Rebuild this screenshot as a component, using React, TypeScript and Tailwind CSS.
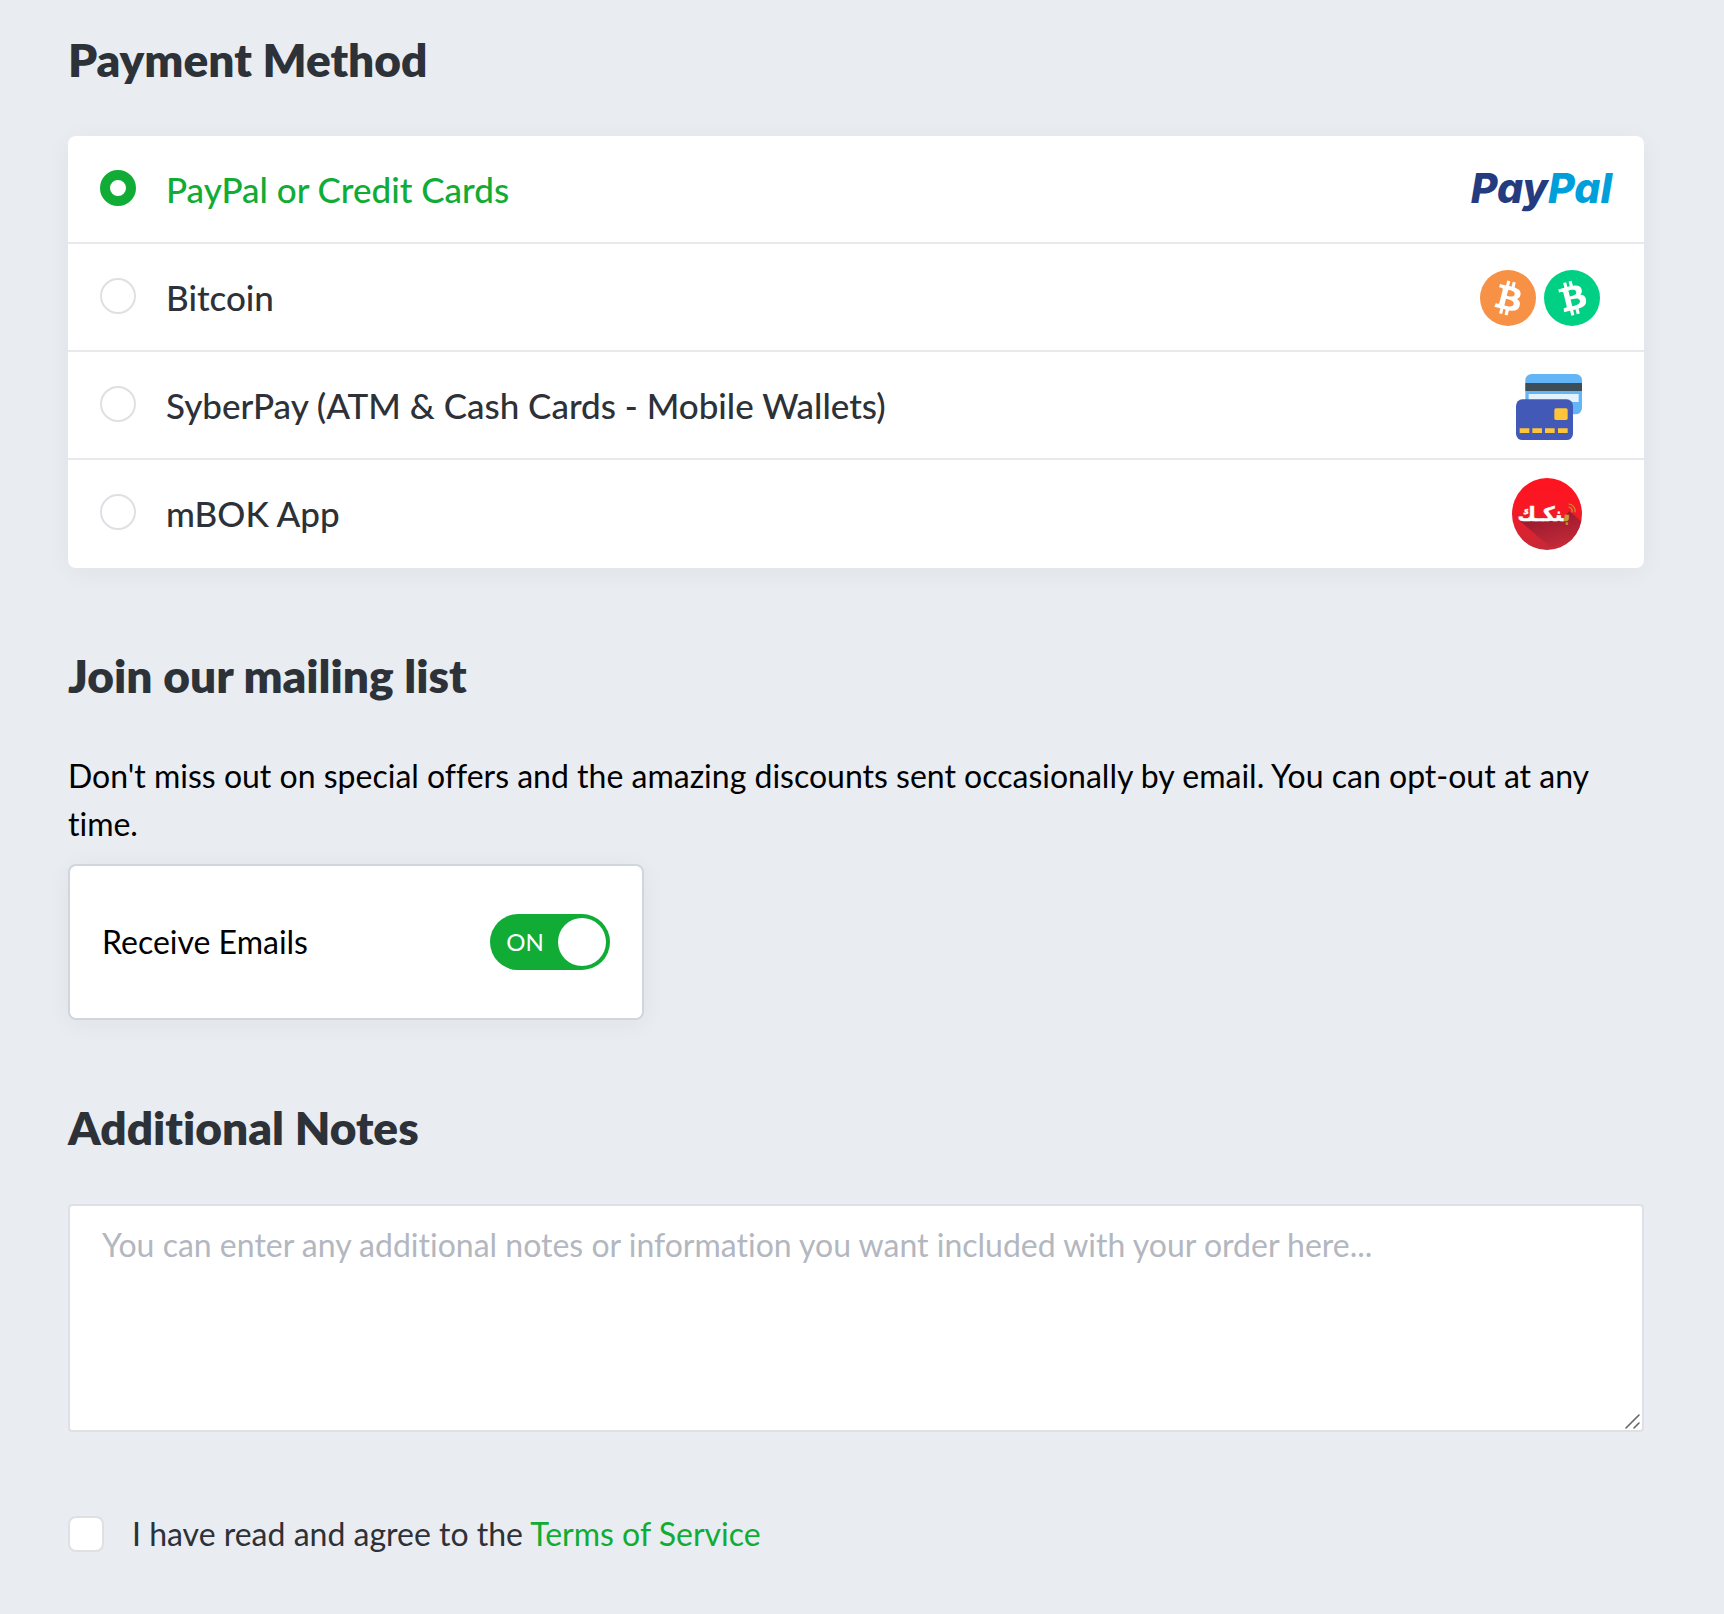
import { useState, type ReactNode } from "react";

const BTC =
  "M23.189 14.02c.314-2.096-1.283-3.223-3.465-3.975l.708-2.84-1.728-.43-.69 2.765c-.454-.114-.92-.22-1.385-.326l.695-2.783L15.596 6l-.708 2.839c-.376-.086-.746-.17-1.104-.26l.002-.009-2.384-.595-.46 1.846s1.283.294 1.256.312c.7.175.826.638.805 1.006l-.806 3.235c.048.012.11.03.18.057l-.183-.045-1.13 4.532c-.086.212-.303.531-.793.41.018.025-1.256-.313-1.256-.313l-.858 1.978 2.25.561c.418.105.828.215 1.231.318l-.715 2.872 1.727.43.708-2.84c.472.127.93.245 1.378.357l-.706 2.828 1.728.43.715-2.866c2.948.558 5.164.333 6.097-2.333.752-2.146-.037-3.385-1.588-4.192 1.13-.26 1.98-1.003 2.207-2.538zm-3.95 5.538c-.533 2.147-4.148.986-5.32.695l.95-3.805c1.172.293 4.929.872 4.37 3.11zm.535-5.569c-.487 1.953-3.495.96-4.47.717l.86-3.45c.975.243 4.118.696 3.61 2.733z";

function PayPalLogo() {
  return (
    <svg width="150" height="64" viewBox="0 0 150 64" role="img" aria-label="PayPal">
      <text x="148" y="46" textAnchor="end" fontSize="41" fontWeight="800" fontStyle="italic" fontFamily="Inter, sans-serif">
        <tspan fill="#253b80">Pay</tspan>
        <tspan fill="#009fda">Pal</tspan>
      </text>
    </svg>
  );
}

function Coin({ color, turn }: { color: string; turn: number }) {
  return (
    <svg width="56" height="56" viewBox="0 0 32 32" aria-hidden="true">
      <circle cx="16" cy="16" r="16" fill={color} />
      <path d={BTC} fill="#fff" transform={`rotate(${turn} 16 16)`} />
    </svg>
  );
}

function CardsIcon() {
  return (
    <svg width="66" height="66" viewBox="0 0 198 198" aria-hidden="true">
      <rect x="28" y="0" width="170" height="121" rx="19" fill="#64b5f6" />
      <rect x="28" y="27" width="170" height="24" fill="#3c4f58" />
      <rect x="38" y="60" width="150" height="24" fill="#e3f2fd" />
      <rect x="0" y="76" width="171" height="122" rx="19" fill="#4359b8" />
      <rect x="115" y="103" width="40" height="35" rx="5" fill="#ffc539" />
      <path d="M11 163h29v14H11zM49 163h29v14H49zM87 163h29v14H87zM126 163h29v14h-29z" fill="#ffc539" />
    </svg>
  );
}

function BankakLogo() {
  return (
    <svg width="70" height="72" viewBox="0 0 70 72" role="img" aria-label="Bankak">
      <defs>
        <linearGradient id="disc" x1="0" y1="0" x2="0" y2="1">
          <stop offset="0" stopColor="#ff131f" />
          <stop offset="0.4" stopColor="#f81824" />
          <stop offset="1" stopColor="#c32b38" />
        </linearGradient>
        <linearGradient id="shade" x1="0.3" y1="0" x2="0.7" y2="1">
          <stop offset="0" stopColor="#7c1630" />
          <stop offset="1" stopColor="#c32b38" />
        </linearGradient>
        <linearGradient id="word" gradientUnits="userSpaceOnUse" x1="6" y1="0" x2="60" y2="0">
          <stop offset="0.83" stopColor="#fff" />
          <stop offset="0.86" stopColor="#c49a34" />
        </linearGradient>
        <clipPath id="round">
          <ellipse cx="35" cy="36" rx="35" ry="36" />
        </clipPath>
      </defs>
      <g clipPath="url(#round)">
        <rect width="70" height="72" fill="url(#disc)" />
        <path d="M8 43L38 69L66 62L70 44L57 33L50 43Z" fill="url(#shade)" opacity="0.8" />
      </g>
      <text x="32" y="43" textAnchor="middle" direction="rtl" fontSize="20" fontWeight="700" fontFamily="'DejaVu Sans', sans-serif" fill="url(#word)" stroke="url(#word)" strokeWidth="0.6">
        بنكـك
      </text>
      <path d="M57 26a7 7 0 0 1 6 8M57 29a4 4 0 0 1 3 5" fill="none" stroke="#c49a34" strokeWidth="1.2" strokeLinecap="round" />
    </svg>
  );
}

const methods: { id: string; label: string; logo: ReactNode }[] = [
  { id: "paypal", label: "PayPal or Credit Cards", logo: <PayPalLogo /> },
  {
    id: "bitcoin",
    label: "Bitcoin",
    logo: (
      <span className="mt-0.5 mr-3.5 flex gap-2">
        <Coin color="#f79145" turn={0} />
        <Coin color="#00d084" turn={-28} />
      </span>
    ),
  },
  {
    id: "syberpay",
    label: "SyberPay (ATM & Cash Cards - Mobile Wallets)",
    logo: (
      <span className="mt-1 mr-8">
        <CardsIcon />
      </span>
    ),
  },
  {
    id: "mbok",
    label: "mBOK App",
    logo: (
      <span className="mt-0.5 mr-8">
        <BankakLogo />
      </span>
    ),
  },
];

function Heading({ children }: { children: ReactNode }) {
  return <h2 className="mb-12 text-[46px] leading-[56px] font-extrabold text-[#2d3138]">{children}</h2>;
}

export default function App() {
  const [method, setMethod] = useState("paypal");
  const [emails, setEmails] = useState(true);

  return (
    <main className="min-h-screen bg-[#e9ecf1] pt-8 pr-20 pb-12 pl-[68px] font-['Lato',sans-serif] text-[32px] leading-[48px] text-black [font-variant-ligatures:none]">
      <section>
        <Heading>Payment Method</Heading>
        <div role="radiogroup" aria-label="Payment Method" className="rounded-lg bg-white shadow-[0_4px_24px_rgba(40,50,60,0.05)]">
          {methods.map((m) => (
            <label key={m.id} className="flex h-[108px] cursor-pointer items-center border-b-2 border-[#e8e9ed] pr-[30px] pl-8 last:border-transparent">
              <input
                type="radio"
                name="method"
                checked={method === m.id}
                onChange={() => setMethod(m.id)}
                className="mb-0.5 size-9 shrink-0 appearance-none rounded-full border-2 border-[#dfe0e4] bg-white checked:border-[10px] checked:border-[#10ac35]"
              />
              <span className={`ml-[30px] flex-1 text-[35px] font-medium ${method === m.id ? "text-[#10ac35]" : "text-[#2d3138]"}`}>{m.label}</span>
              {m.logo}
            </label>
          ))}
        </div>
      </section>

      <section className="mt-20">
        <Heading>Join our mailing list</Heading>
        <p>Don't miss out on special offers and the amazing discounts sent occasionally by email. You can opt-out at any time.</p>
        <label className="mt-4 flex h-[156px] w-full max-w-[576px] cursor-pointer items-center justify-between rounded-lg border-2 border-[#d1d5de] bg-white px-8 shadow-[0_4px_24px_rgba(40,50,60,0.05)]">
          <span>Receive Emails</span>
          <span className="relative flex h-14 w-30 items-center rounded-full">
            <input
              type="checkbox"
              role="switch"
              checked={emails}
              onChange={(e) => setEmails(e.target.checked)}
              className="absolute inset-0 appearance-none rounded-full bg-gray-400 checked:bg-[#10ac35]"
            />
            <span className="pointer-events-none relative w-17 pl-0.5 text-center text-2xl text-white">{emails ? "ON" : "OFF"}</span>
            <span className="pointer-events-none relative size-12 rounded-full bg-white" />
          </span>
        </label>
      </section>

      <section className="mt-20">
        <Heading>Additional Notes</Heading>
        <div className="relative">
          <textarea
            aria-label="Additional Notes"
            placeholder="You can enter any additional notes or information you want included with your order here..."
            className="block h-[228px] w-full resize-none rounded border-2 border-[#dfe0e4] bg-white px-8 py-[15px] placeholder:text-[#b3b7c0]"
          />
          <svg width="18" height="18" viewBox="0 0 18 18" aria-hidden="true" className="pointer-events-none absolute right-[2px] bottom-[2px]">
            <path d="M2 16L15 3M10 16L15 11" stroke="#666" strokeWidth="1.6" strokeLinecap="round" />
          </svg>
        </div>
      </section>

      <div className="mt-[78px] flex items-center">
        <input id="terms" type="checkbox" className="size-9 shrink-0 appearance-none rounded-lg border-2 border-[#dfe0e4] bg-white checked:bg-[#10ac35]" />
        <label htmlFor="terms" className="ml-7 text-[#2d3138]">
          I have read and agree to the{" "}
          <a href="#terms-of-service" className="text-[#10ac35]">
            Terms of Service
          </a>
        </label>
      </div>
    </main>
  );
}
